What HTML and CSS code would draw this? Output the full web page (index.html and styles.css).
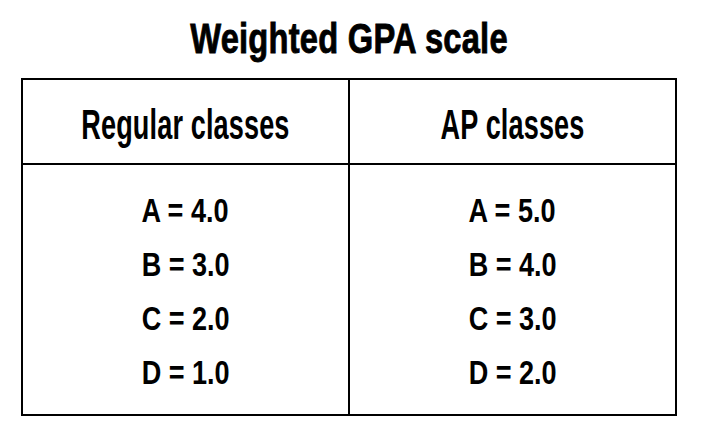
FILE: index.html
```html
<!DOCTYPE html>
<html lang="en">
<head>
<meta charset="utf-8">
<title>Weighted GPA scale</title>
<link rel="stylesheet" href="styles.css">
</head>
<body>
<main class="page">
  <h1 class="title"><span class="squeeze title-text">Weighted GPA scale</span></h1>
  <table class="scale">
    <thead>
      <tr>
        <th class="head"><span class="squeeze head-text">Regular classes</span></th>
        <th class="head"><span class="squeeze head-text">AP classes</span></th>
      </tr>
    </thead>
    <tbody>
      <tr>
        <td class="grades">
          <div class="grade"><span class="squeeze grade-text">A = 4.0</span></div>
          <div class="grade"><span class="squeeze grade-text">B = 3.0</span></div>
          <div class="grade"><span class="squeeze grade-text">C = 2.0</span></div>
          <div class="grade"><span class="squeeze grade-text">D = 1.0</span></div>
        </td>
        <td class="grades">
          <div class="grade"><span class="squeeze grade-text">A = 5.0</span></div>
          <div class="grade"><span class="squeeze grade-text">B = 4.0</span></div>
          <div class="grade"><span class="squeeze grade-text">C = 3.0</span></div>
          <div class="grade"><span class="squeeze grade-text">D = 2.0</span></div>
        </td>
      </tr>
    </tbody>
  </table>
</main>
</body>
</html>
```

FILE: styles.css
```css
html, body {
  margin: 0;
  padding: 0;
  background: #ffffff;
}

body {
  width: 702px;
  height: 444px;
  overflow: hidden;
  font-family: "Liberation Sans", Arial, sans-serif;
  color: #000000;
}

.page {
  display: flex;
  flex-direction: column;
  align-items: flex-start;
  padding-left: 21px;
}

.squeeze {
  display: inline-block;
  white-space: nowrap;
  transform-origin: center center;
}

.title {
  width: 656px;
  margin: 0 0 16px;
  padding-top: 14px;
  font-size: 43px;
  line-height: 48px;
  font-weight: 700;
  text-align: center;
}

.title-text {
  transform: scaleX(0.76);
  -webkit-text-stroke: 0.9px #000;
  letter-spacing: 0.3px;
}

.scale {
  width: 656px;
  border-collapse: collapse;
  border: 2px solid #000;
  table-layout: fixed;
}

.head {
  height: 83px;
  box-sizing: border-box;
  padding: 6px 0 0;
  font-size: 42px;
  line-height: 77px;
  font-weight: 700;
  text-align: center;
  vertical-align: top;
  border: 2px solid #000;
}

.head-text {
  transform: scaleX(0.645);
  letter-spacing: 0.2px;
}

.grades {
  padding: 19px 0 14px;
  text-align: center;
  vertical-align: top;
  border: 2px solid #000;
}

.grade {
  font-size: 33px;
  line-height: 54px;
  font-weight: 700;
}

.grade-text {
  transform: scaleX(0.82);
}
```
